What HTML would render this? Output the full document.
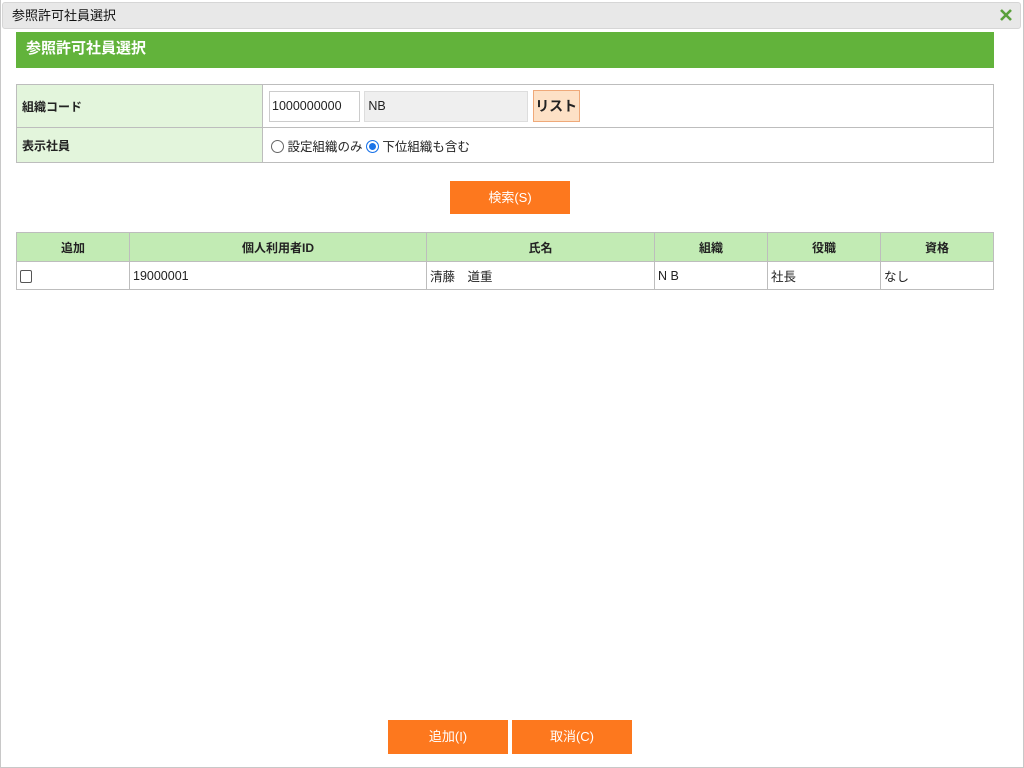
<!DOCTYPE html>
<html><head><meta charset="utf-8"><style>
*{box-sizing:border-box}
body{margin:0;width:1024px;height:768px;background:#fff;font-family:"Liberation Sans","Noto Sans CJK JP",sans-serif;font-size:12px;color:#222;position:relative;overflow:hidden}
.win{position:absolute;left:0;top:0;width:1024px;height:768px;border:1px solid #c8c8c8;border-top:none}
.tb{position:absolute;left:2px;top:2px;width:1019px;height:27px;background:#e8e8e8;border:1px solid #d6d6d6;border-radius:3px;font-size:13px;line-height:26px;padding-left:9px;color:#111}
.hd{position:absolute;left:16px;top:32px;width:978px;height:36px;background:#62b33b;color:#fff;font-weight:bold;font-size:15px;line-height:33px;padding-left:10px}
table{border-collapse:collapse;position:absolute;left:16px}
td,th{border:1px solid #bdbdbd;padding:0 3px}
.f td.l{background:#e3f5dc;font-weight:bold;width:246px;padding-left:5px;font-size:12px}
.btn{position:absolute;background:#fd781e;color:#fff;text-align:center;font-size:13px}
.g th{background:#c2ebb4;font-weight:bold;height:29px;font-size:12px}
.g td{height:28px;font-size:12.5px}
.r{display:inline-block;width:13px;height:13px;border-radius:50%;border:1px solid #666;vertical-align:-2px}
</style></head><body>
<div class="win"></div>
<div class="tb">参照許可社員選択</div>
<svg style="position:absolute;left:999px;top:8px" width="14" height="14" viewBox="0 0 14 14"><path d="M2 2L12 12M12 2L2 12" stroke="#5aa03a" stroke-width="2.6"/></svg>
<div class="hd">参照許可社員選択</div>
<table class="f" style="top:84px;width:978px">
<tr style="height:43px"><td class="l">組織コード</td><td style="padding-left:6px">
<span style="display:inline-block;width:91px;height:31px;border:1px solid #ccc;vertical-align:middle;line-height:29px;padding-left:2px;font-size:12.5px">1000000000</span>
<span style="display:inline-block;width:164px;height:31px;background:#efefef;border:1px solid #ddd;vertical-align:middle;line-height:29px;padding-left:3px;margin-left:1px;font-size:12.5px">NB</span>
<span style="display:inline-block;width:47px;height:32px;background:#fde1c6;border:1px solid #efa979;vertical-align:middle;line-height:30px;text-align:center;font-weight:bold;font-size:14px;margin-left:1px">リスト</span></td></tr>
<tr style="height:35px"><td class="l">表示社員</td><td style="padding-left:8px;font-size:12.5px"><span class="r"></span> 設定組織のみ <span class="r" style="border:1px solid #1a73e8;box-shadow:inset 0 0 0 2px #fff;background:#1a73e8"></span> 下位組織も含む</td></tr>
</table>
<div class="btn" style="left:450px;top:181px;width:120px;height:33px;line-height:33px">検索(S)</div>
<table class="g" style="top:232px;width:978px">
<tr><th style="width:113px">追加</th><th style="width:297px">個人利用者ID</th><th style="width:228px">氏名</th><th style="width:113px">組織</th><th style="width:113px">役職</th><th>資格</th></tr>
<tr><td><span style="display:inline-block;width:12px;height:13px;border:1px solid #555;border-radius:2px;vertical-align:-3px"></span></td><td>19000001</td><td>清藤　道重</td><td>N B</td><td>社長</td><td>なし</td></tr>
</table>
<div class="btn" style="left:388px;top:720px;width:120px;height:34px;line-height:34px">追加(I)</div>
<div class="btn" style="left:512px;top:720px;width:120px;height:34px;line-height:34px">取消(C)</div>
</body></html>
